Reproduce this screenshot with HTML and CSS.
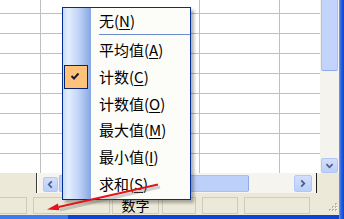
FILE: index.html
```html
<!DOCTYPE html>
<html lang="zh-CN">
<head>
<meta charset="utf-8">
<title>状态栏菜单</title>
<link rel="stylesheet" href="styles.css">
</head>
<body>
<div class="window">
  <div class="main">
    <div class="sheet-row">
      <div class="grid">
        <div class="c"></div><div class="c"></div><div class="c"></div><div class="c last"></div>
        <div class="c"></div><div class="c"></div><div class="c"></div><div class="c last"></div>
        <div class="c"></div><div class="c"></div><div class="c"></div><div class="c last"></div>
        <div class="c"></div><div class="c"></div><div class="c"></div><div class="c last"></div>
        <div class="c"></div><div class="c"></div><div class="c"></div><div class="c last"></div>
        <div class="c"></div><div class="c"></div><div class="c"></div><div class="c last"></div>
        <div class="c"></div><div class="c"></div><div class="c"></div><div class="c last"></div>
        <div class="c"></div><div class="c"></div><div class="c"></div><div class="c last"></div>
        <div class="c"></div><div class="c"></div><div class="c"></div><div class="c last"></div>
      </div>
      <div class="vscroll">
        <div class="vthumb"></div>
        <div class="vtrack"></div>
        <div class="sbtn vbtn">
          <svg width="17" height="15" viewBox="0 0 17 15"><path d="M5 6 L8.5 9.5 L12 6" fill="none" stroke="#4d6185" stroke-width="2"/></svg>
        </div>
      </div>
    </div>
    <div class="hscroll-row">
      <div class="tabs"></div>
      <div class="split"></div>
      <div class="htrack">
        <div class="sbtn lbtn">
          <svg width="15" height="15" viewBox="0 0 15 15"><path d="M9 4 L5.5 7.5 L9 11" fill="none" stroke="#4d6185" stroke-width="2"/></svg>
        </div>
        <div class="hthumb"></div>
        <div class="hspace"></div>
        <div class="sbtn rbtn">
          <svg width="18" height="17" viewBox="0 0 18 17"><path d="M7 5 L10.5 8.5 L7 12" fill="none" stroke="#4d6185" stroke-width="2"/></svg>
        </div>
      </div>
      <div class="corner"></div>
    </div>
    <div class="status">
      <div class="panel p1"></div>
      <div class="panel p2"></div>
      <div class="panel p3">数字</div>
      <div class="panel p4"></div>
      <div class="panel p5"></div>
      <div class="panel p6"></div>
      <div class="grip">
        <svg width="11" height="12" viewBox="0 0 11 12">
          <rect x="8" y="1" width="2" height="2" fill="#b5b19f"/>
          <rect x="5" y="4" width="2" height="2" fill="#b5b19f"/>
          <rect x="8" y="4" width="2" height="2" fill="#b5b19f"/>
          <rect x="2" y="7" width="2" height="2" fill="#b5b19f"/>
          <rect x="5" y="7" width="2" height="2" fill="#b5b19f"/>
          <rect x="8" y="7" width="2" height="2" fill="#b5b19f"/>
          <rect x="9" y="2" width="1" height="1" fill="#fff"/>
          <rect x="6" y="5" width="1" height="1" fill="#fff"/>
          <rect x="9" y="5" width="1" height="1" fill="#fff"/>
          <rect x="3" y="8" width="1" height="1" fill="#fff"/>
          <rect x="6" y="8" width="1" height="1" fill="#fff"/>
          <rect x="9" y="8" width="1" height="1" fill="#fff"/>
        </svg>
      </div>
    </div>
    <div class="bottom-frame"></div>
  </div>
  <div class="right-frame"></div>

  <div class="menu">
    <div class="item first"><span class="icon"></span><span class="label">无(<u>N</u>)</span></div>
    <div class="sep"></div>
    <div class="item"><span class="icon"></span><span class="label">平均值(<u>A</u>)</span></div>
    <div class="item"><span class="icon"><span class="check">
      <svg width="22" height="22" viewBox="0 0 22 22"><path d="M6.5 10 L9 12.5 L13.5 7.5" fill="none" stroke="#1b1b3a" stroke-width="2"/></svg>
    </span></span><span class="label">计数(<u>C</u>)</span></div>
    <div class="item"><span class="icon"></span><span class="label">计数值(<u>O</u>)</span></div>
    <div class="item"><span class="icon"></span><span class="label">最大值(<u>M</u>)</span></div>
    <div class="item"><span class="icon"></span><span class="label">最小值(<u>I</u>)</span></div>
    <div class="item"><span class="icon"></span><span class="label">求和(<u>S</u>)</span></div>
  </div>

  <svg class="arrow" width="344" height="219" viewBox="0 0 344 219">
    <line x1="160" y1="187" x2="60" y2="210" stroke="#7a7a7a" stroke-opacity="0.35" stroke-width="3"/>
    <line x1="158" y1="184.5" x2="58.7" y2="206.9" stroke="#e3141b" stroke-width="2"/>
    <polygon points="47,209.5 59.5,210.3 57.9,203.5" fill="#e3141b"/>
  </svg>
</div>
</body>
</html>
```

FILE: styles.css
```css
html, body {
  margin: 0;
  padding: 0;
}

body {
  width: 344px;
  height: 219px;
  overflow: hidden;
  font-family: "Noto Sans CJK SC", "Noto Sans", sans-serif;
  background: #ffffff;
}

.window {
  position: relative;
  display: flex;
  width: 344px;
  height: 219px;
}

.main {
  width: 339px;
  display: flex;
  flex-direction: column;
}

.sheet-row {
  display: flex;
  height: 173px;
}

.grid {
  width: 320px;
  height: 173px;
  overflow: hidden;
  display: grid;
  grid-template-columns: 41px 159px 80px 40px;
  grid-template-rows: 14px repeat(8, 20px);
  background: #ffffff;
}

.c {
  box-sizing: border-box;
  border-right: 1px solid #c0c0c0;
  border-bottom: 1px solid #c0c0c0;
}

.c.last {
  border-right: none;
}

.vscroll {
  width: 19px;
  display: flex;
  flex-direction: column;
  background: #f4f3ee;
}

.vthumb {
  box-sizing: border-box;
  margin-left: 1px;
  width: 17px;
  height: 71px;
  background: #c2d3fc;
  border: 1px solid #aac0f1;
  border-top: none;
  border-bottom-color: #8fa9e3;
  border-radius: 0 0 2px 2px;
}

.vtrack {
  flex: 1;
}

.sbtn {
  box-sizing: border-box;
  display: flex;
  align-items: center;
  justify-content: center;
  background: linear-gradient(#d2defd, #bccffa);
  border: 1px solid #b3c7f4;
  border-radius: 2px;
}

.sbtn svg {
  display: block;
}

.vbtn {
  margin-left: 1px;
  width: 17px;
  height: 15px;
}

.hscroll-row {
  display: flex;
  height: 20px;
  background: #ece9d8;
}

.tabs {
  width: 36px;
  background: #ece9d8;
}

.split {
  box-sizing: border-box;
  width: 2px;
  border-left: 1px solid #3c3c3c;
  background: #ffffff;
}

.htrack {
  box-sizing: border-box;
  width: 278px;
  display: flex;
  align-items: flex-start;
  padding-left: 5px;
  background: #f5f4ef;
}

.lbtn {
  width: 15px;
  height: 15px;
  margin-top: 4px;
}

.hthumb {
  box-sizing: border-box;
  width: 190px;
  height: 17px;
  margin-top: 2px;
  margin-left: 1px;
  background: #bdd0f9;
  border: 1px solid #a9bff0;
  border-right-color: #8fa9e3;
  border-radius: 2px;
}

.hspace {
  width: 45px;
}

.rbtn {
  width: 18px;
  height: 17px;
  margin-top: 2px;
}

.corner {
  box-sizing: border-box;
  width: 23px;
  border-left: 1px solid #1e1e1e;
  background: #ece9d8;
}

.status {
  box-sizing: border-box;
  display: flex;
  height: 22px;
  padding-top: 4px;
  background: #ece9d8;
}

.panel {
  box-sizing: border-box;
  height: 17px;
  border: 1px solid #d0ccbc;
  font-size: 14px;
  line-height: 15px;
  color: #000000;
  text-align: center;
}

.p1 { width: 27px; border-left: none; }
.p2 { width: 77px; margin-left: 6px; }
.p3 { width: 47px; margin-left: 2px; }
.p4 { width: 34px; margin-left: 3px; }
.p5 { width: 36px; margin-left: 6px; }
.p6 { width: 66px; margin-left: 6px; }

.grip {
  margin-left: auto;
  margin-right: 1px;
  width: 11px;
  height: 12px;
  margin-top: 5px;
}

.grip svg {
  display: block;
}

.bottom-frame {
  height: 4px;
  background: linear-gradient(to right, #3b7bf0 0, #3b7bf0 68px, #0d45d2 68px);
}

.right-frame {
  width: 5px;
  background: linear-gradient(to right, #7a9de8 0, #2a63e6 40%, #0c43d1 100%);
}

/* popup menu */
.menu {
  position: absolute;
  left: 62px;
  top: 7px;
  box-sizing: border-box;
  width: 129px;
  height: 193px;
  border: 1px solid #002d96;
  background-color: #fcfcf9;
  background-image: linear-gradient(to right, #cadbf8 0%, #e4eefd 18%, #c2d5f7 55%, #86a6e3 100%);
  background-size: 28px 100%;
  background-repeat: no-repeat;
  box-shadow: 3px 3px 3px rgba(0, 0, 0, 0.3);
  display: flex;
  flex-direction: column;
}

.item {
  display: flex;
  align-items: center;
  height: 26.67px;
  flex: none;
}

.item.first {
  height: 26px;
}

.icon {
  width: 28px;
  display: flex;
  align-items: center;
}

.check {
  box-sizing: border-box;
  margin-left: 1px;
  width: 24px;
  height: 24px;
  background: #ffc27a;
  border: 1px solid #0a246a;
}

.check svg {
  display: block;
}

.label {
  padding-left: 8px;
  font-size: 15px;
  line-height: 20px;
  color: #000000;
  white-space: nowrap;
}

.label u {
  text-decoration-thickness: 1px;
  text-underline-offset: 2px;
}

.sep {
  flex: none;
  height: 3px;
  margin-left: 36px;
  border-top: 1px solid #6a8ccb;
  box-sizing: border-box;
}

.arrow {
  position: absolute;
  left: 0;
  top: 0;
  pointer-events: none;
}
```
